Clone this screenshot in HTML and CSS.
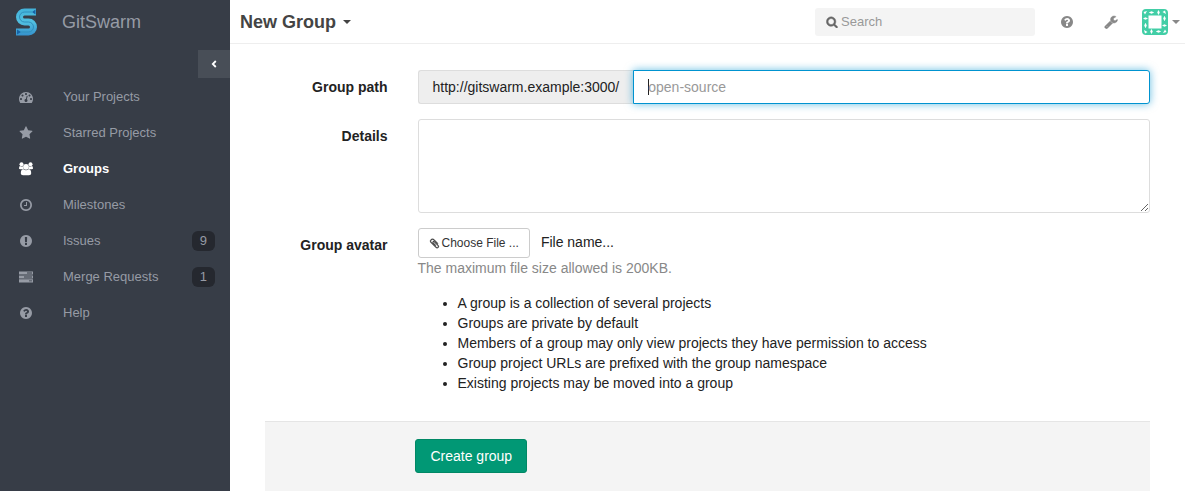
FILE: index.html
```html
<!DOCTYPE html>
<html lang="en">
<head>
<meta charset="utf-8">
<title>New Group</title>
<link rel="stylesheet" href="styles.css">
</head>
<body>
<div class="page">
  <aside class="sidebar">
    <a class="brand" href="#">
      <svg class="brand-logo" viewBox="0 0 22 28" aria-hidden="true">
        <defs>
          <linearGradient id="swarm" gradientUnits="userSpaceOnUse" x1="0" y1="0" x2="0" y2="28">
            <stop offset="0" stop-color="#42b2da"/>
            <stop offset=".5" stop-color="#52c0e0"/>
            <stop offset="1" stop-color="#3490cc"/>
          </linearGradient>
        </defs>
        <path d="M20 4H8.500A5 5 0 0 0 8.500 14H12.500A5 5 0 0 1 12.500 24H0" fill="none" stroke="url(#swarm)" stroke-width="7"/>
        <path d="M16 4H8.500A5 5 0 0 0 8.500 14H12.500A5 5 0 0 1 12.500 24H5" fill="none" stroke="#2f8fbd" stroke-width="1"/>
        <path d="M16 4L19.500 1.500V6.500ZM5 24L1 21.500V26.500Z" fill="#1763a5"/>
      </svg>
      <span>GitSwarm</span>
    </a>
    <button class="collapse" type="button" aria-label="Collapse sidebar">
      <svg viewBox="0 0 8 10" aria-hidden="true"><path d="M5.800 2L2.800 5L5.800 8" fill="none" stroke="currentColor" stroke-width="1.800"/></svg>
    </button>
    <nav class="nav">
      <a class="nav-item" href="#">
        <svg class="icon" viewBox="0 0 1792 1792" aria-hidden="true"><path d="M384 1152q0-53-37.500-90.500t-90.500-37.500-90.500 37.500-37.500 90.500 37.500 90.500 90.500 37.500 90.500-37.500 37.500-90.500zm192-448q0-53-37.500-90.500t-90.500-37.500-90.500 37.500-37.500 90.500 37.500 90.500 90.500 37.500 90.500-37.500 37.500-90.500zm428 481l101-382q6-26-7.500-48.500t-38.500-29.500-48 6.500-30 39.500l-101 382q-60 5-107 43.500t-63 98.500q-20 77 20 146t117 89 146-20 89-117q16-60-6-117t-72-91zm660-33q0-53-37.500-90.500t-90.500-37.500-90.500 37.500-37.500 90.500 37.500 90.500 90.500 37.500 90.500-37.500 37.500-90.500zm-640-640q0-53-37.500-90.500t-90.500-37.500-90.500 37.500-37.500 90.500 37.500 90.500 90.500 37.500 90.500-37.500 37.500-90.500zm448 192q0-53-37.500-90.500t-90.500-37.500-90.500 37.500-37.500 90.500 37.500 90.500 90.500 37.500 90.500-37.500 37.500-90.500zm320 448q0 261-141 483-19 29-54 29h-1402q-35 0-54-29-141-221-141-483 0-182 71-348t191-286 286-191 348-71 348 71 286 191 191 286 71 348z"/></svg>
        <span>Your Projects</span>
      </a>
      <a class="nav-item" href="#">
        <svg class="icon" viewBox="0 0 1792 1792" aria-hidden="true"><path d="M1728 647q0 22-26 48l-363 354 86 500q1 7 1 20 0 21-10.500 35.500t-30.500 14.500q-19 0-40-12l-449-236-449 236q-22 12-40 12-21 0-31.500-14.500t-10.500-35.500q0-6 2-20l86-500-364-354q-25-27-25-48 0-37 56-46l502-73 225-455q19-41 49-41t49 41l225 455 502 73q56 9 56 46z"/></svg>
        <span>Starred Projects</span>
      </a>
      <a class="nav-item active" href="#">
        <svg class="icon" viewBox="0 0 14 14" aria-hidden="true"><circle cx="2.500" cy="2.200" r="2"/><circle cx="11.500" cy="2.200" r="2"/><path d="M0 6.500Q0 4 1 4Q3 5 4 4.300Q3.700 6 4.900 7.200H1.400Q0 7.200 0 6.500ZM14 6.500Q14 4 13 4Q11 5 10 4.300Q10.300 6 9.100 7.200H12.600Q14 7.200 14 6.500Z"/><circle cx="7" cy="4.800" r="2.900"/><path d="M1.800 11.500Q1.800 7.300 4.400 7.300Q7 9 9.600 7.300Q12.200 7.300 12.200 11.500Q12.200 13.300 10 13.300H4Q1.800 13.300 1.800 11.500Z"/></svg>
        <span>Groups</span>
      </a>
      <a class="nav-item" href="#">
        <svg class="icon" viewBox="0 0 1792 1792" aria-hidden="true"><path d="M1024 544v448q0 14-9 23t-23 9h-320q-14 0-23-9t-9-23v-64q0-14 9-23t23-9h224v-352q0-14 9-23t23-9h64q14 0 23 9t9 23zm416 352q0-148-73-273t-198-198-273-73-273 73-198 198-73 273 73 273 198 198 273 73 273-73 198-198 73-273zm224 0q0 209-103 385.500t-279.500 279.500-385.500 103-385.500-103-279.500-279.500-103-385.500 103-385.500 279.500-279.500 385.500-103 385.500 103 279.500 279.500 103 385.500z"/></svg>
        <span>Milestones</span>
      </a>
      <a class="nav-item" href="#">
        <svg class="icon" viewBox="0 0 1792 1792" aria-hidden="true"><path d="M896 128q209 0 385.500 103t279.500 279.500 103 385.500-103 385.500-279.500 279.500-385.500 103-385.500-103-279.500-279.500-103-385.500 103-385.500 279.500-279.500 385.500-103zm128 1247v-190q0-14-9-23.500t-22-9.500h-192q-13 0-23 10t-10 23v190q0 13 10 23t23 10h192q13 0 22-9.500t9-23.500zm-2-344l18-621q0-12-10-18-10-8-24-8h-220q-14 0-24 8-10 6-10 18l17 621q0 10 10 17.500t24 7.500h185q14 0 23.500-7.500t10.500-17.500z"/></svg>
        <span>Issues</span>
        <span class="count">9</span>
      </a>
      <a class="nav-item" href="#">
        <svg class="icon" viewBox="0 0 14 14" aria-hidden="true"><path fill-rule="evenodd" d="M0 1.500H14V4.600H0ZM8 2.600V3.500H13V2.600ZM0 5.400H14V8.500H0ZM5 6.500V7.400H13V6.500ZM0 9.300H14V12.400H0ZM10 10.400V11.300H13V10.400Z"/></svg>
        <span>Merge Requests</span>
        <span class="count">1</span>
      </a>
      <a class="nav-item" href="#">
        <svg class="icon" viewBox="0 0 1792 1792" aria-hidden="true"><path id="help-shape" d="M1024 1376v-192q0-14-9-23t-23-9h-192q-14 0-23 9t-9 23v192q0 14 9 23t23 9h192q14 0 23-9t9-23zm256-672q0-88-55.500-163t-138.500-116-170-41q-243 0-371 213-15 24 8 42l132 100q7 6 19 6 16 0 25-12 53-68 86-92 34-24 86-24 48 0 85.500 26t37.500 59q0 38-20 61t-68 45q-63 28-115.500 86.500t-52.500 125.500v36q0 14 9 23t23 9h192q14 0 23-9t9-23q0-19 21.500-49.500t54.500-49.500q32-18 49-28.500t46-35 44.500-48 28-60.500 12.500-81zm384 192q0 209-103 385.500t-279.500 279.500-385.500 103-385.500-103-279.500-279.500-103-385.500 103-385.500 279.500-279.500 385.500-103 385.500 103 279.500 279.500 103 385.500z"/></svg>
        <span>Help</span>
      </a>
    </nav>
  </aside>

  <div class="main">
    <header class="topbar">
      <h1 class="title"><button class="title-button" type="button">New Group <span class="caret"></span></button></h1>
      <label class="search">
        <svg class="search-icon" viewBox="0 0 1792 1792" aria-hidden="true"><path d="M1216 832q0-185-131.500-316.500t-316.500-131.500-316.500 131.500-131.500 316.500 131.500 316.500 316.500 131.500 316.500-131.500 131.500-316.500zm512 832q0 52-38 90t-90 38q-54 0-90-38l-343-342q-179 124-399 124-143 0-273.500-55.500t-225-150-150-225-55.500-273.500 55.500-273.500 150-225 225-150 273.500-55.500 273.500 55.500 225 150 150 225 55.500 273.500q0 220-124 399l343 343q37 37 37 90z"/></svg>
        <input class="search-input" type="search" placeholder="Search" aria-label="Search">
      </label>
      <a class="tool" href="#" aria-label="Help">
        <svg class="icon" viewBox="0 0 1792 1792" aria-hidden="true"><use href="#help-shape"/></svg>
      </a>
      <a class="tool" href="#" aria-label="Admin area">
        <svg class="icon icon-heavy" viewBox="0 0 1792 1792" aria-hidden="true"><path d="M448 1472q0-26-19-45t-45-19-45 19-19 45 19 45 45 19 45-19 19-45zm644-420l-682 682q-37 37-90 37-52 0-91-37l-106-108q-38-36-38-90 0-53 38-91l681-681q39 98 114.500 173.500t173.500 114.500zm634-435q0 39-23 106-47 134-164.500 217.500t-258.500 83.500q-185 0-316.500-131.500t-131.500-316.500 131.500-316.500 316.500-131.500q58 0 121.500 16.500t107.500 46.500q16 11 16 28t-16 28l-293 169v224l193 107q5-3 79-48.500t135.500-81 70.500-35.500q15 0 23.500 10t8.500 25z"/></svg>
      </a>
      <button class="profile" type="button" aria-label="Profile">
        <svg class="avatar" viewBox="0 0 26 26" aria-hidden="true">
          <rect width="26" height="26" fill="#42cea6"/>
          <g fill="#fff">
            <rect x="6.500" y="6.500" width="13" height="13"/>
            <g id="marks">
              <path d="M1.500 3L5 2L3 5.500ZM6.800 3.500L9.500 2.200L12.200 3.500L9.500 4.800ZM16.500 1L17.800 3.500L16.500 6L15.200 3.500Z"/>
            </g>
            <use href="#marks" transform="rotate(90 13 13)"/>
            <use href="#marks" transform="rotate(180 13 13)"/>
            <use href="#marks" transform="rotate(270 13 13)"/>
          </g>
        </svg>
        <span class="caret"></span>
      </button>
    </header>

    <form class="content">
      <div class="fields">
        <div class="row">
          <label class="label" for="path">Group path</label>
          <div class="path-group">
            <span class="path-prefix">http://gitswarm.example:3000/</span>
            <input class="path-input" id="path" type="text" placeholder="open-source">
          </div>
        </div>
        <div class="row">
          <label class="label" for="details">Details</label>
          <textarea class="details" id="details"></textarea>
        </div>
        <div class="row">
          <label class="label" for="choose">Group avatar</label>
          <div>
            <div class="file-line">
              <button class="choose" id="choose" type="button">
                <svg class="clip" viewBox="0 0 1792 1792" aria-hidden="true"><path d="M1596 1385q0 117-79 196t-196 79q-135 0-235-100l-777-776q-113-115-113-271 0-159 110-270t269-111q158 0 273 113l605 606q10 10 10 22 0 16-30.500 46.500t-46.500 30.500q-13 0-23-10l-606-607q-79-77-181-77-106 0-179 75t-73 181q0 105 76 181l776 777q63 63 145 63 64 0 106-42t42-106q0-82-63-145l-581-581q-26-24-60-24-29 0-48 19t-19 48q0 32 25 59l410 410q10 10 10 22 0 16-31 47t-47 31q-12 0-22-10l-410-410q-63-61-63-149 0-82 57-139t139-57q88 0 149 63l581 581q100 98 100 235z"/></svg>
                <span>Choose File ...</span>
              </button>
              <span>File name...</span>
            </div>
            <p class="hint">The maximum file size allowed is 200KB.</p>
            <ul class="notes">
              <li>A group is a collection of several projects</li>
              <li>Groups are private by default</li>
              <li>Members of a group may only view projects they have permission to access</li>
              <li>Group project URLs are prefixed with the group namespace</li>
              <li>Existing projects may be moved into a group</li>
            </ul>
          </div>
        </div>
      </div>
      <div class="actions">
        <button class="create" type="submit">Create group</button>
      </div>
    </form>
  </div>
</div>
</body>
</html>
```
FILE: styles.css
```css
* {
  box-sizing: border-box;
}

body {
  margin: 0;
  background: #fff;
  color: #222;
  font: 14px/20px "Liberation Sans", Arial, sans-serif;
}

button,
input,
textarea {
  font: inherit;
  color: inherit;
}

button {
  cursor: pointer;
}

svg {
  display: block;
  flex: none;
  fill: currentColor;
}

.page {
  display: flex;
  min-height: 100vh;
}

/* Sidebar */
.sidebar {
  display: flex;
  flex-direction: column;
  flex: none;
  width: 230px;
  background: #373d47;
  color: #969ba5;
}

.brand {
  display: flex;
  align-items: center;
  gap: 24px;
  height: 44px;
  padding-left: 16px;
  color: #969ba5;
  font-size: 18px;
  text-decoration: none;
}

.brand-logo {
  width: 22px;
  height: 28px;
}

.collapse {
  display: flex;
  align-items: center;
  justify-content: center;
  align-self: flex-end;
  width: 32px;
  height: 28px;
  margin-top: 6px;
  padding: 0;
  border: 0;
  background: #484e57;
  color: #fff;
}

.collapse svg {
  width: 8px;
  height: 10px;
}

.nav {
  margin-top: 1px;
}

.nav-item {
  display: flex;
  align-items: center;
  height: 36px;
  padding: 0 15px 0 19px;
  color: #969ba5;
  font-size: 13px;
  text-decoration: none;
}

.nav-item .icon {
  margin-right: 30px;
}

.nav-item.active {
  color: #fff;
  font-weight: bold;
}

.icon {
  width: 14px;
  height: 14px;
}

.icon-heavy {
  stroke: currentColor;
  stroke-width: 60;
}

.count {
  margin-left: auto;
  padding: 0 8px;
  border-radius: 6px;
  background: #25282f;
}

/* Top bar */
.main {
  display: flex;
  flex-direction: column;
  flex: 1;
  min-width: 0;
}

.topbar {
  display: flex;
  align-items: center;
  height: 44px;
  padding: 0 5px 0 10px;
  border-bottom: 1px solid #eee;
  color: #888;
}

.title {
  margin: 0 auto 0 0;
  color: #444;
  font-size: 18px;
}

.title-button {
  display: flex;
  align-items: center;
  gap: 7px;
  padding: 0;
  border: 0;
  background: none;
}

.caret {
  border: 4px solid transparent;
  border-top-color: currentColor;
  border-bottom: 0;
}

.search {
  display: flex;
  align-items: center;
  gap: 3px;
  width: 220px;
  height: 28px;
  margin-right: 25px;
  padding-left: 11px;
  border-radius: 3px;
  background: #f4f4f4;
  color: #666;
}

.search-icon {
  width: 12px;
  height: 12px;
  stroke: currentColor;
  stroke-width: 70;
}

.search-input {
  flex: 1;
  min-width: 0;
  padding: 0;
  border: 0;
  outline: 0;
  background: none;
  font-size: 13px;
}

.search-input::placeholder,
.path-input::placeholder {
  color: #999;
  opacity: 1;
}

.tool {
  margin-right: 30px;
  color: #888;
}

.profile {
  display: flex;
  align-items: center;
  gap: 4px;
  margin-left: -6px;
  padding: 0;
  border: 0;
  background: none;
}

.avatar {
  width: 26px;
  height: 26px;
  border-radius: 4px;
}

/* Form */
.content {
  display: flex;
  flex-direction: column;
  flex: 1;
  padding: 26px 35px 0;
}

.fields {
  display: grid;
  gap: 15px;
  margin: 0 -15px;
}

.row {
  display: grid;
  grid-template-columns: minmax(0, 2fr) minmax(0, 10fr);
}

.row > :last-child {
  margin: 0 15px;
}

.label {
  padding: 7px 15px 0;
  font-weight: bold;
  text-align: right;
}

.path-group {
  display: flex;
  height: 34px;
}

.path-prefix {
  padding: 6px 14px;
  border: 1px solid #ddd;
  border-right: 0;
  border-radius: 3px 0 0 3px;
  background: #eee;
}

.path-input {
  flex: 1;
  min-width: 0;
  padding: 6px 14px;
  border: 1px solid #0093d0;
  border-radius: 0 3px 3px 0;
  outline: 0;
  background: linear-gradient(#222, #222) 14px center / 1px 16px no-repeat #fff;
  box-shadow: 0 0 8px rgba(0, 147, 208, .6);
}

.details {
  display: block;
  height: 94px;
  padding: 6px 14px;
  border: 1px solid #ddd;
  border-radius: 3px;
  outline: 0;
  resize: vertical;
}

.file-line {
  display: flex;
  align-items: flex-start;
  gap: 11px;
}

.file-line > span {
  padding-top: 4px;
}

.choose {
  display: flex;
  align-items: center;
  gap: 2px;
  height: 30px;
  padding: 0 10px;
  border: 1px solid #ccc;
  border-radius: 3px;
  background: #fff;
  color: #333;
  font-size: 12px;
}

.clip {
  width: 11px;
  height: 11px;
  stroke: currentColor;
  stroke-width: 60;
}

.hint {
  margin: 0;
  color: #888;
}

.notes {
  margin: 15px 0 0;
  padding-left: 40px;
}

.actions {
  flex: 1;
  margin-top: 28px;
  padding: 17px 17px 18px 17%;
  border-top: 1px solid #e5e5e5;
  background: #f4f4f4;
}

.create {
  height: 34px;
  padding: 0 14px;
  border: 1px solid #018865;
  border-radius: 3px;
  background: #019875;
  color: #fff;
}
```
